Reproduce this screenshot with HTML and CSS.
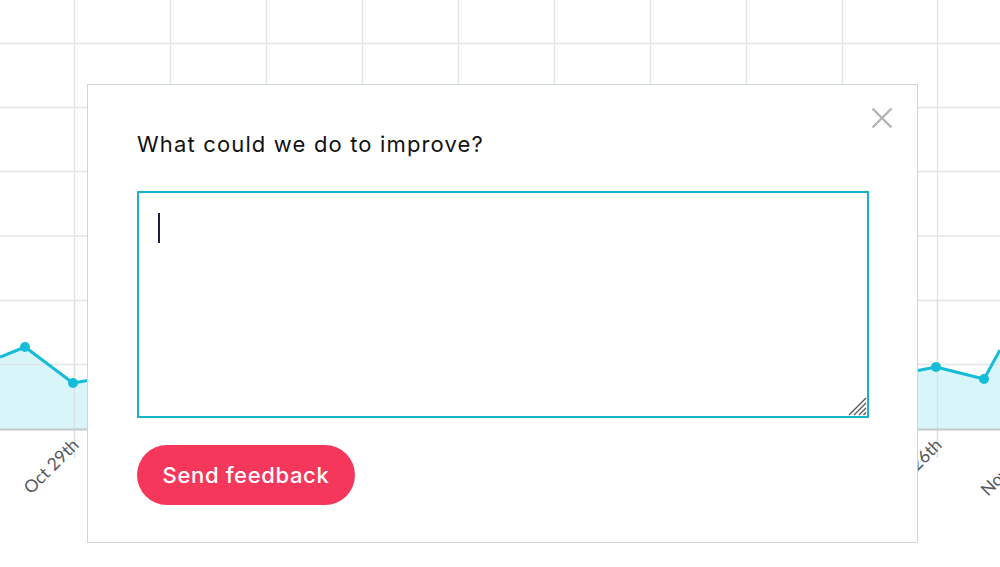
FILE: index.html
```html
<!DOCTYPE html>
<html lang="en">
<head>
<meta charset="utf-8">
<title>Feedback</title>
<link rel="stylesheet" href="styles.css">
</head>
<body>
<div class="page">
  <svg class="chart" width="1000" height="567" viewBox="0 0 1000 567" xmlns="http://www.w3.org/2000/svg">
    <g class="grid" stroke="#e2e5e8" stroke-width="1.4">
      <line x1="74.5" y1="0" x2="74.5" y2="458"/>
      <line x1="170.5" y1="0" x2="170.5" y2="458"/>
      <line x1="266.5" y1="0" x2="266.5" y2="458"/>
      <line x1="362.5" y1="0" x2="362.5" y2="458"/>
      <line x1="458.5" y1="0" x2="458.5" y2="458"/>
      <line x1="554.5" y1="0" x2="554.5" y2="458"/>
      <line x1="650.5" y1="0" x2="650.5" y2="458"/>
      <line x1="746.5" y1="0" x2="746.5" y2="458"/>
      <line x1="842.5" y1="0" x2="842.5" y2="458"/>
      <line x1="937.5" y1="0" x2="937.5" y2="458"/>
      <line x1="0" y1="43.5" x2="1000" y2="43.5"/>
      <line x1="0" y1="107.5" x2="1000" y2="107.5"/>
      <line x1="0" y1="171.5" x2="1000" y2="171.5"/>
      <line x1="0" y1="236" x2="1000" y2="236"/>
      <line x1="0" y1="300.5" x2="1000" y2="300.5"/>
    </g>
    <polygon fill="#d8f5fa" points="0,357 25,347 73,383 120,375 900,374 936,367 984,379 1000,350 1000,429 0,429"/>
    <line x1="0" y1="364.5" x2="1000" y2="364.5" stroke="#e2e5e8" stroke-width="1.4"/>
    <line x1="74.5" y1="300" x2="74.5" y2="458" stroke="#dde1e4" stroke-width="1.4"/>
    <line x1="937.5" y1="300" x2="937.5" y2="458" stroke="#dde1e4" stroke-width="1.4"/>
    <line x1="0" y1="429.5" x2="1000" y2="429.5" stroke="#c3c7ca" stroke-width="2"/>
    <polyline fill="none" stroke="#14bcd8" stroke-width="3" stroke-linejoin="round" points="0,357 25,347 73,383 120,375"/>
    <polyline fill="none" stroke="#14bcd8" stroke-width="3" stroke-linejoin="round" points="900,374 936,367 984,379 1000,350"/>
    <g fill="#14bcd8">
      <circle cx="25" cy="347" r="5"/>
      <circle cx="73" cy="383" r="5"/>
      <circle cx="936" cy="367" r="5"/>
      <circle cx="984" cy="379" r="5"/>
    </g>
    <g class="labels" fill="#55595d" font-family="Lato, 'Open Sans', sans-serif" font-size="17.5" text-anchor="end">
      <text transform="translate(80 446) rotate(-45)">Oct 29th</text>
      <text transform="translate(943 446) rotate(-45)">Nov 26th</text>
      <text transform="translate(1039 446) rotate(-45)">Nov 29th</text>
    </g>
  </svg>

  <div class="dialog" role="dialog" aria-labelledby="fb-title">
    <button class="close" type="button" aria-label="Close">
      <svg width="22" height="22" viewBox="0 0 22 22"><path d="M1.5 1.5 L20.5 20.5 M20.5 1.5 L1.5 20.5" stroke="#b3b3b3" stroke-width="2.4" fill="none"/></svg>
    </button>
    <h2 class="title" id="fb-title">What could we do to improve?</h2>
    <div class="field">
      <textarea class="input" aria-label="Feedback"></textarea>
      <span class="caret"></span>
      <span class="grip">
        <svg width="20" height="20" viewBox="0 0 20 20"><path d="M19 2 L2 19 M19 7 L7 19 M19 12 L12 19 M19 16.5 L16.5 19" stroke="#555" stroke-width="1.3" fill="none"/></svg>
      </span>
    </div>
    <button class="send" type="button">Send feedback</button>
  </div>
</div>
</body>
</html>
```

FILE: styles.css
```css
html, body {
  margin: 0;
  padding: 0;
  background: #ffffff;
}

.page {
  position: relative;
  width: 1000px;
  height: 567px;
  overflow: hidden;
  font-family: Inter, "Liberation Sans", sans-serif;
}

.chart {
  display: block;
}

.dialog {
  position: absolute;
  left: 87px;
  top: 84px;
  background: #ffffff;
  border: 1.5px solid #cdd6da;
  padding: 46px 48px 0 49px;
  box-sizing: content-box;
  width: 732px;
  height: 411px;
  display: flex;
  flex-direction: column;
  align-items: flex-start;
}

.close {
  position: absolute;
  top: 22px;
  right: 24px;
  padding: 0;
  border: 0;
  background: none;
  width: 22px;
  height: 22px;
  cursor: pointer;
}

.close svg {
  display: block;
}

.title {
  margin: 0;
  font-size: 22px;
  line-height: 26px;
  font-weight: 400;
  color: #111111;
  letter-spacing: 1.15px;
}

.field {
  position: relative;
  margin-top: 34px;
  width: 732px;
  height: 227px;
}

.input {
  display: block;
  width: 100%;
  height: 100%;
  box-sizing: border-box;
  border: 2px solid #17b3c6;
  padding: 20px;
  font: 20px Inter, "Liberation Sans", sans-serif;
  resize: none;
  outline: none;
  caret-color: transparent;
}

.caret {
  position: absolute;
  left: 21px;
  top: 22px;
  width: 2px;
  height: 30px;
  background: #1b1d3a;
}

.grip {
  position: absolute;
  right: 2px;
  bottom: 2px;
  width: 20px;
  height: 20px;
}

.grip svg {
  display: block;
}

.send {
  margin-top: 27px;
  width: 218px;
  height: 60px;
  border: 0;
  border-radius: 30px;
  background: #f6375c;
  color: #ffffff;
  font-family: Inter, "Liberation Sans", sans-serif;
  font-size: 22px;
  font-weight: 500;
  letter-spacing: 0.65px;
  padding: 0;
  cursor: pointer;
}
```
